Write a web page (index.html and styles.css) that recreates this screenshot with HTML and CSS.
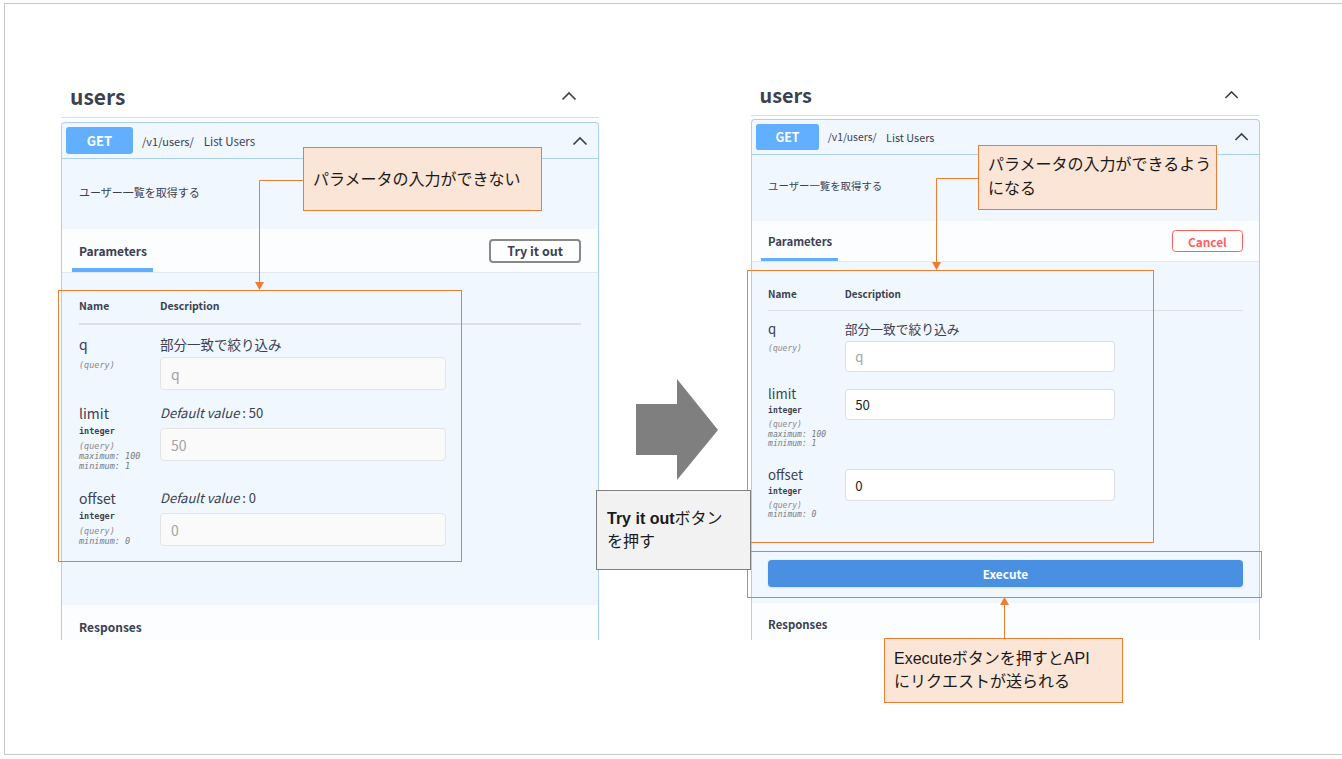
FILE: index.html
```html
<!DOCTYPE html>
<html lang="ja">
<head>
<meta charset="utf-8">
<title>Try it out</title>
<link rel="stylesheet" href="styles.css">
</head>
<body>
<div class="slide">
  <section class="panel">
    <div class="tag">
      <h3 class="tag-title">users</h3>
      <svg class="chev" width="16" height="10" viewBox="0 0 16 10"><path d="M1.5 8.5 L8 2 L14.5 8.5" /></svg>
    </div>
    <div class="opblock">
      <div class="summary">
        <span class="method">GET</span>
        <span class="path">/v1/users/</span>
        <span class="sum-desc">List Users</span>
        <svg class="chev chev-op" width="16" height="10" viewBox="0 0 16 10"><path d="M1.5 8.5 L8 2 L14.5 8.5" /></svg>
      </div>
      <div class="op-desc">ユーザー一覧を取得する</div>
      <div class="sec-header">
        <div class="tab">Parameters</div>
        <div class="btn btn-try">Try it out</div>
      </div>
      <div class="params">
        <div class="params-head"><span class="col-name">Name</span><span>Description</span></div>
        <div class="prow">
          <div class="pname"><div class="nm">q</div><div class="pin">(query)</div></div>
          <div class="pdesc"><div class="dtext">部分一致で絞り込み</div><div class="inp">q</div></div>
        </div>
        <div class="prow">
          <div class="pname"><div class="nm">limit</div><div class="ptype">integer</div><div class="pin">(query)</div><div class="pext">maximum: 100</div><div class="pext">minimum: 1</div></div>
          <div class="pdesc"><div class="dflt"><i>Default value</i> : 50</div><div class="inp">50</div></div>
        </div>
        <div class="prow">
          <div class="pname"><div class="nm">offset</div><div class="ptype">integer</div><div class="pin">(query)</div><div class="pext">minimum: 0</div></div>
          <div class="pdesc"><div class="dflt"><i>Default value</i> : 0</div><div class="inp">0</div></div>
        </div>
      </div>
      <div class="responses">Responses</div>
    </div>
  </section>

  <section class="panel panel-after">
    <div class="tag">
      <h3 class="tag-title">users</h3>
      <svg class="chev" width="16" height="10" viewBox="0 0 16 10"><path d="M1.5 8.5 L8 2 L14.5 8.5" /></svg>
    </div>
    <div class="opblock">
      <div class="summary">
        <span class="method">GET</span>
        <span class="path">/v1/users/</span>
        <span class="sum-desc">List Users</span>
        <svg class="chev chev-op" width="16" height="10" viewBox="0 0 16 10"><path d="M1.5 8.5 L8 2 L14.5 8.5" /></svg>
      </div>
      <div class="op-desc">ユーザー一覧を取得する</div>
      <div class="sec-header">
        <div class="tab">Parameters</div>
        <div class="btn btn-cancel">Cancel</div>
      </div>
      <div class="params params-live">
        <div class="params-head"><span class="col-name">Name</span><span>Description</span></div>
        <div class="prow">
          <div class="pname"><div class="nm">q</div><div class="pin">(query)</div></div>
          <div class="pdesc"><div class="dtext">部分一致で絞り込み</div><div class="inp inp-live inp-empty">q</div></div>
        </div>
        <div class="prow">
          <div class="pname"><div class="nm">limit</div><div class="ptype">integer</div><div class="pin">(query)</div><div class="pext">maximum: 100</div><div class="pext">minimum: 1</div></div>
          <div class="pdesc"><div class="inp inp-live">50</div></div>
        </div>
        <div class="prow">
          <div class="pname"><div class="nm">offset</div><div class="ptype">integer</div><div class="pin">(query)</div><div class="pext">minimum: 0</div></div>
          <div class="pdesc"><div class="inp inp-live">0</div></div>
        </div>
      </div>
      <div class="execute-wrap"><div class="btn-exec">Execute</div></div>
      <div class="responses">Responses</div>
    </div>
  </section>
</div>

<div class="hl hl-a"></div>
<div class="hl hl-b"></div>
<div class="hl hl-c"></div>

<svg class="links" width="1342" height="759" viewBox="0 0 1342 759">
  <polygon class="big-arrow" points="636,404 677,404 677,379 718,430 677,480 677,455 636,455" />
  <polyline class="ln" points="303,180.5 259.5,180.5 259.5,283" />
  <polygon class="ah" points="255,282 264,282 259.5,290" />
  <polyline class="ln" points="978,178.5 936.5,178.5 936.5,263" />
  <polygon class="ah" points="932,262 941,262 936.5,270" />
  <polyline class="ln" points="1004.5,638 1004.5,604" />
  <polygon class="ah" points="1000,605 1009,605 1004.5,597" />
</svg>

<div class="note note-l">パラメータの入力ができない</div>
<div class="note note-r">パラメータの入力ができるよう<br>になる</div>
<div class="note note-t"><b>Try it out</b>ボタン<br>を押す</div>
<div class="note note-e">Executeボタンを押すとAPI<br>にリクエストが送られる</div>
</body>
</html>
```
FILE: styles.css
```css
* { box-sizing: border-box; }
html, body { margin: 0; padding: 0; background: #fff; }
body {
  position: relative;
  width: 1342px;
  height: 759px;
  overflow: hidden;
  font-family: "Noto Sans CJK JP", "Noto Sans", sans-serif;
  color: #3b4151;
}

.slide {
  margin: 3px 0 0 4px;
  width: 1346px;
  height: 752px;
  border: 1px solid #c6c6c6;
  display: flex;
  align-items: flex-start;
  gap: 152px;
  padding: 71px 0 0 56px;
}

.panel {
  flex: none;
  width: 538px;
  height: 565px;
  overflow: hidden;
}
.panel-after {
  zoom: 0.946;
  height: 597px;
}

/* tag header */
.tag {
  height: 43px;
  display: flex;
  align-items: center;
  justify-content: space-between;
  padding: 0 22px 0 9px;
  border-bottom: 1px solid #d9dbdf;
  margin-bottom: 4px;
}
.tag-title {
  margin: 0;
  font-size: 21px;
  font-weight: 700;
  line-height: 1;
}
.chev path {
  fill: none;
  stroke: #3b4151;
  stroke-width: 1.7;
}

/* operation block */
.opblock {
  border: 1px solid #a9cff5;
  border-bottom: none;
  border-radius: 4px 4px 0 0;
  background: #f0f7ff;
}
.summary {
  height: 36px;
  display: flex;
  align-items: center;
  padding: 0 10px 0 4px;
  border-bottom: 1px solid #a9cff5;
}
.method {
  width: 67px;
  height: 27px;
  border-radius: 3px;
  background: #61affe;
  color: #fff;
  font-size: 13px;
  font-weight: 700;
  display: flex;
  align-items: center;
  justify-content: center;
}
.path { margin-left: 9px; font-size: 11px; }
.sum-desc { margin-left: 10px; font-size: 11.5px; }
.chev-op { margin-left: auto; }

.op-desc {
  height: 70px;
  padding: 25px 17px 0;
  font-size: 11px;
  line-height: 16px;
}

.sec-header {
  height: 44px;
  display: flex;
  align-items: stretch;
  justify-content: space-between;
  padding: 0 17px 0 10px;
  background: #fcfdff;
  border-bottom: 1px solid #e1e7ee;
}
.tab {
  display: flex;
  align-items: center;
  padding: 4px 6px 0 7px;
  font-size: 12px;
  font-weight: 700;
  border-bottom: 4px solid #61affe;
}
.btn {
  align-self: center;
  height: 24px;
  padding: 0 16px;
  border-radius: 4px;
  font-size: 12.5px;
  font-weight: 700;
  display: flex;
  align-items: center;
  background: #fff;
}
.btn-try { border: 2px solid #888; color: #3b4151; }
.btn-cancel { border: 2px solid #ff6060; color: #ff6060; }

/* parameters table */
.params { padding: 26px 17px 55px; }
.params-live { padding-bottom: 20px; }
.params-head {
  display: flex;
  font-size: 10.5px;
  font-weight: 700;
  line-height: 14px;
  padding-bottom: 10px;
  border-bottom: 2px solid #dde1e7;
}
.col-name { width: 81px; }
.prow { display: flex; margin-top: 14px; }
.params-head + .prow { margin-top: 10px; }
.pname { width: 81px; flex: none; padding-bottom: 4px; }
.nm { font-size: 14px; line-height: 18px; }
.ptype {
  margin-top: 4px;
  font-family: "DejaVu Sans Mono", monospace;
  font-size: 8.5px;
  font-weight: 700;
  line-height: 11px;
}
.pin, .pext {
  font-family: "DejaVu Sans Mono", monospace;
  font-size: 8.5px;
  font-style: italic;
  line-height: 10px;
  color: #8a8a8a;
}
.pin { margin-top: 4px; }
.nm + .pin { margin-top: 7px; }
.pext { color: #7a7a7a; }

.pdesc { flex: 1; }
.dtext { font-size: 13.5px; line-height: 18px; }
.dflt { font-size: 13px; line-height: 18px; }
.inp {
  width: 286px;
  height: 33px;
  margin-top: 4px;
  padding: 0 10px;
  border: 1px solid #e4e4e4;
  border-radius: 4px;
  background: #fafafa;
  color: #a4a4a4;
  font-size: 14px;
  display: flex;
  align-items: center;
}
.dflt + .inp { margin-top: 6px; }
.inp-live { background: #fff; color: #1f1f1f; border-color: #dedede; }
.inp-live.inp-empty { color: #a4a4a4; }

.execute-wrap { padding: 19px 17px 17px; }
.btn-exec {
  height: 28.5px;
  border-radius: 4px;
  background: #4990e2;
  color: #fff;
  font-size: 12.5px;
  font-weight: 700;
  display: flex;
  align-items: center;
  justify-content: center;
  box-shadow: 0 1px 2px rgba(0,0,0,.1);
}

.responses {
  height: 120px;
  padding: 14px 17px 0;
  background: #fcfdff;
  font-size: 12px;
  font-weight: 700;
  line-height: 16px;
}

/* annotations */
.hl {
  position: absolute;
  border: 1px solid #ed7d31;
}
.hl-a { left: 58px; top: 290px; width: 404px; height: 272px; }
.hl-b { left: 747px; top: 270px; width: 407px; height: 273px; }
.hl-c { left: 747px; top: 551px; width: 515px; height: 47px; }

.links { position: absolute; left: 0; top: 0; }
.big-arrow { fill: #7f7f7f; }
.ln { fill: none; stroke: #ed7d31; stroke-width: 1; }
.ah { fill: #ed7d31; }

.note {
  position: absolute;
  background: #fbe5d6;
  border: 1px solid #ed7d31;
  font-family: "Liberation Sans", "Noto Sans CJK JP", sans-serif;
  font-size: 16px;
  color: #1a1a1a;
  white-space: nowrap;
  padding-left: 9px;
}
.note-l { left: 303px; top: 147px; width: 239px; height: 64px; line-height: 24px; padding-top: 20px; }
.note-r { left: 978px; top: 145px; width: 239px; height: 65px; line-height: 24px; padding-top: 7px; }
.note-e { left: 884px; top: 638px; width: 239px; height: 65px; line-height: 23px; padding-top: 8px; }
.note-t {
  left: 596px; top: 490px; width: 155px; height: 80px;
  line-height: 23px; padding: 16px 0 0 10px;
  background: #f2f2f2; border-color: #7f7f7f;
}
.note-t b { font-weight: 700; }
```
